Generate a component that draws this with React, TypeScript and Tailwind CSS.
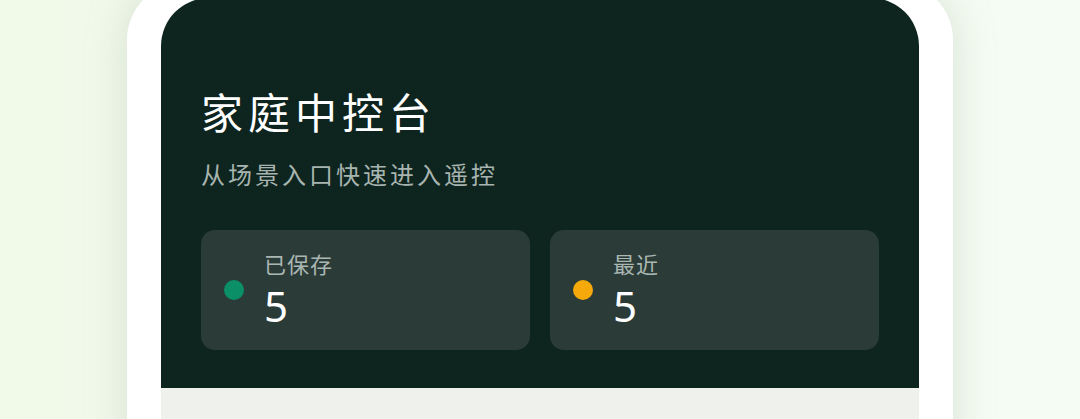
import React from "react";

const font = { fontFamily: '"Noto Sans", "Noto Sans CJK SC", sans-serif' };

function StatCard({ label, value, dot }: { label: string; value: string; dot: string }) {
  return (
    <div className="flex h-[120px] items-center gap-[20px] rounded-[14px] bg-[#2a3b38] pl-[23px]">
      <span className={`h-[20px] w-[20px] shrink-0 rounded-full ${dot}`} />
      <div className="flex flex-col gap-[10px]">
        <span className="text-[22px] leading-[22px] tracking-[1px] text-[#aab6b2]">{label}</span>
        <span className="text-[42px] leading-[42px] text-white">{value}</span>
      </div>
    </div>
  );
}

export default function App() {
  return (
    <div
      className="flex h-[419px] w-full justify-center overflow-hidden bg-gradient-to-r from-[#f1f9e9] via-[#f4fbef] to-[#f5fcf3]"
      style={font}
    >
      <div className="mt-[-18px] h-[520px] w-[826px] shrink-0 rounded-[58px] bg-white px-[34px] pt-[16px] shadow-[0_0_40px_rgba(160,180,160,0.35)]">
        <div className="rounded-t-[48px] bg-[#0e241f] px-[40px] pb-[38px] pt-[90px]">
          <h1 className="text-[42px] leading-[50px] tracking-[5px] text-white">家庭中控台</h1>
          <p className="mt-[21px] text-[24px] leading-[32px] tracking-[3px] text-[#a7b4af]">从场景入口快速进入遥控</p>
          <div className="mt-[39px] grid grid-cols-2 gap-[20px]">
            <StatCard label="已保存" value="5" dot="bg-[#0b8f66]" />
            <StatCard label="最近" value="5" dot="bg-[#f5a90a]" />
          </div>
        </div>
        <div className="h-[140px] bg-[#eff1ed]" />
      </div>
    </div>
  );
}
